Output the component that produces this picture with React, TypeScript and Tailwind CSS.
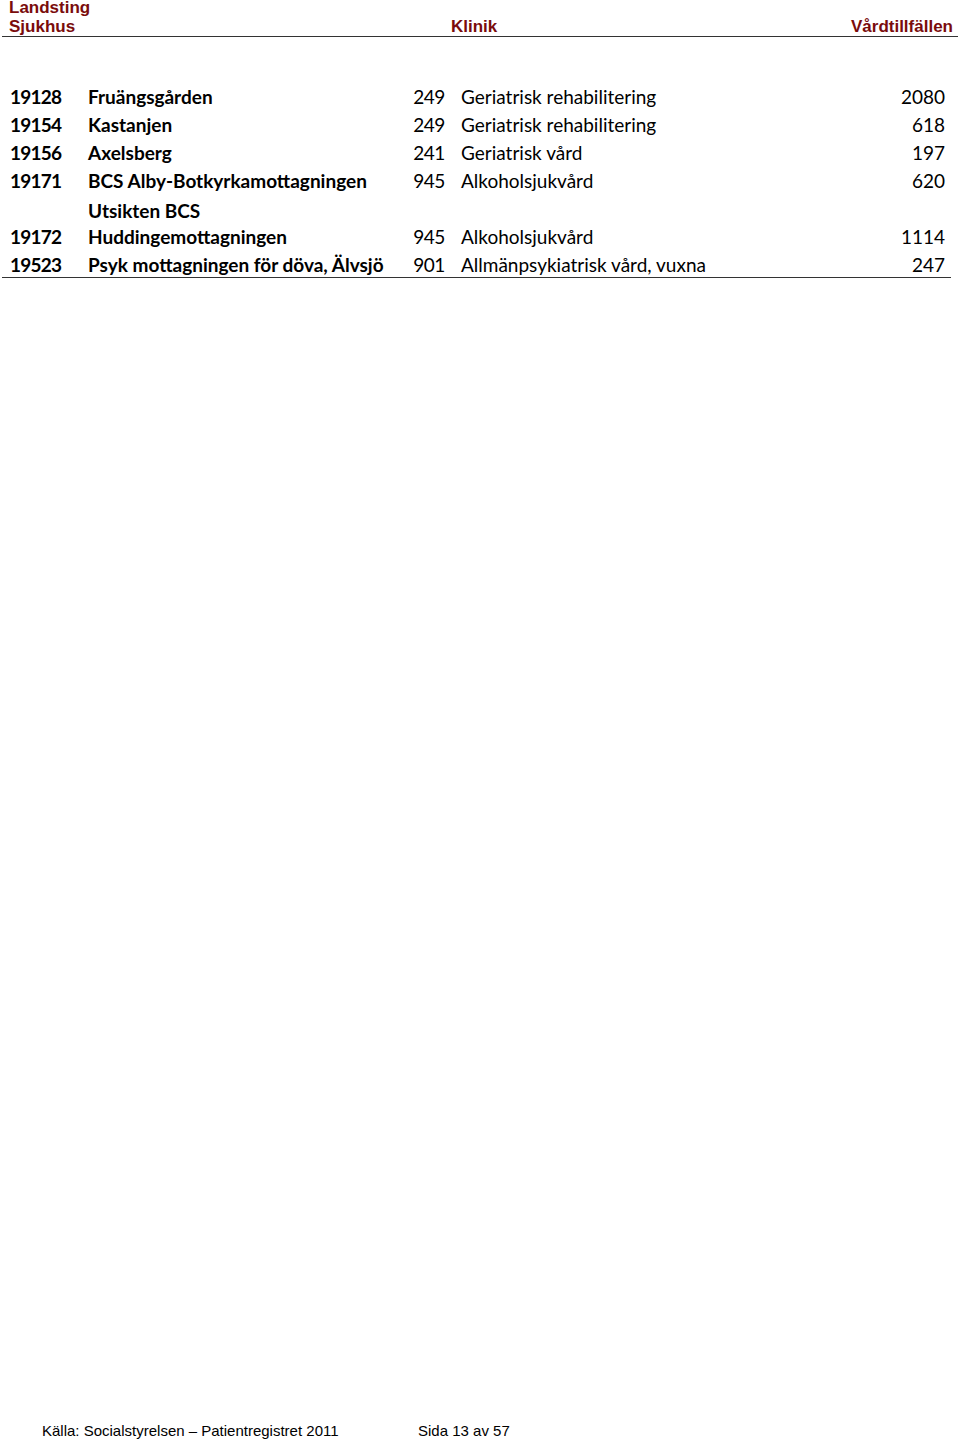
const rows = [
  { id: "19128", name: ["Fruängsgården"], code: "249", klinik: "Geriatrisk rehabilitering", n: "2080" },
  { id: "19154", name: ["Kastanjen"], code: "249", klinik: "Geriatrisk rehabilitering", n: "618" },
  { id: "19156", name: ["Axelsberg"], code: "241", klinik: "Geriatrisk vård", n: "197" },
  { id: "19171", name: ["BCS Alby-Botkyrkamottagningen"], code: "945", klinik: "Alkoholsjukvård", n: "620" },
  { id: "19172", name: ["Utsikten BCS", "Huddingemottagningen"], code: "945", klinik: "Alkoholsjukvård", n: "1114" },
  { id: "19523", name: ["Psyk mottagningen för döva, Älvsjö"], code: "901", klinik: "Allmänpsykiatrisk vård, vuxna", n: "247" },
];

export default function App() {
  return (
    <div className="flex h-[1442px] w-[960px] flex-col bg-white text-black">
      <div className="mx-[2px] flex items-end border-b border-[#333] pl-[7px] pr-[5px] font-['Liberation_Sans',Arial,sans-serif] text-[17px] font-bold leading-[19px] text-[#7a0c0c]">
        <div className="w-[442px]">
          <div className="-mt-[2px]">Landsting</div>
          <div>Sjukhus</div>
        </div>
        <div className="flex-1">Klinik</div>
        <div>Vårdtillfällen</div>
      </div>

      <div className="ml-[2px] mr-[9px] mt-[46px] border-b border-[#333] font-['Lato','Open_Sans',sans-serif] text-[19px] leading-[28px]">
        {rows.map((r, idx) => (
          <div
            key={r.id}
            className={idx === rows.length - 1 ? "flex h-[26px] items-start" : "flex items-end"}
          >
            <div className="w-[86px] pl-[8px] font-bold tracking-[-0.8px]">{r.id}</div>
            <div className={"w-[321px] font-bold" + (r.name.length > 1 ? " pt-[4px]" : "")}>
              {r.name.map((l, i) => (
                <div key={i} className={r.name.length > 1 && i === 0 ? "leading-[24px]" : ""}>
                  {l}
                </div>
              ))}
            </div>
            <div className="w-[36px] text-right tracking-[-0.4px]">{r.code}</div>
            <div className="flex-1 pl-[16px]">{r.klinik}</div>
            <div className="pr-[6px] text-right">{r.n}</div>
          </div>
        ))}
      </div>

      <div className="mt-auto flex pb-[2px] pl-[42px] font-['Liberation_Sans',Arial,sans-serif] text-[15px] leading-[18px]">
        <div className="w-[376px]">Källa: Socialstyrelsen – Patientregistret 2011</div>
        <div>Sida 13 av 57</div>
      </div>
    </div>
  );
}
